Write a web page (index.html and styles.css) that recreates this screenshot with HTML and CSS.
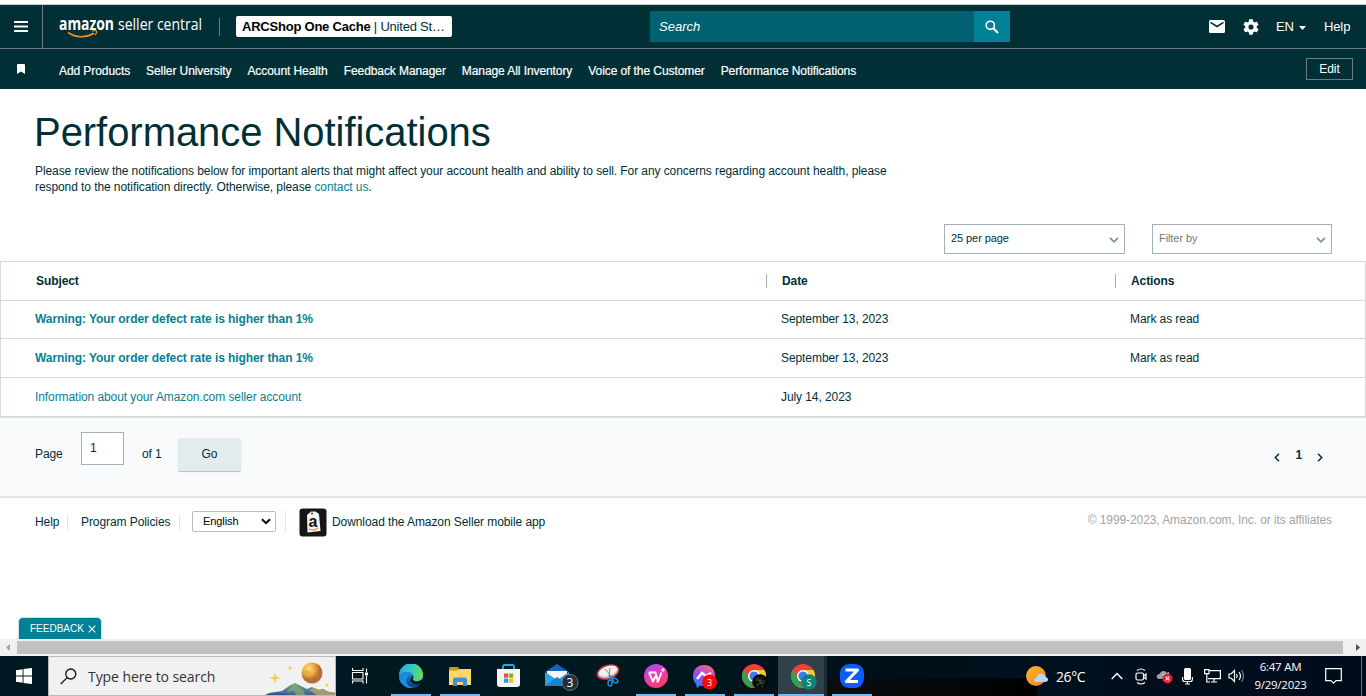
FILE: index.html
```html
<!DOCTYPE html>
<html lang="en">
<head>
    <meta charset="UTF-8">
    <meta name="viewport" content="width=device-width, initial-scale=1.0">
    <title>Performance Notifications</title>
    <link rel="stylesheet" href="styles.css">
</head>
<body>

    <header class="topbar">
        <div class="menu-button">
            <svg width="14" height="11" viewBox="0 0 14 11"><path d="M0 1h14M0 5.5h14M0 10h14" stroke="#fff" stroke-width="1.8"/></svg>
        </div>
        <svg class="logo" width="146" height="34" viewBox="0 -4 146 34">
            <text transform="translate(0 15) scale(.818 1)" class="logo-bold">amazon</text>
            <text transform="translate(59 15) scale(.825 1)" class="logo-light">seller central</text>
            <path d="M9 17.5c8 5.500 18 5.500 26 .8" fill="none" stroke="#f0932b" stroke-width="1.7"/>
            <path d="M33 16.300c2-.8 4-.9 4.500-.3s-.2 2.500-1.500 4" fill="none" stroke="#f0932b" stroke-width="1.200"/>
        </svg>
        <div class="logo-divider"></div>
        <div class="account"><b>ARCShop One Cache</b> <span>|</span> United St…</div>
        <div class="search">
            <div class="search-input">Search</div>
            <div class="search-button">
                <svg width="16" height="16" viewBox="0 0 16 16" fill="none" stroke="#fff"><circle cx="6.300" cy="6.300" r="4.100" stroke-width="1.600"/><path d="M9.300 9.300l4.700 4.700" stroke-width="2"/></svg>
            </div>
        </div>
        <div class="top-links">
            <svg width="16" height="13" viewBox="0 0 16 13"><rect width="16" height="13" rx="1.500" fill="#fff"/><path d="M1.500 2.300L8 6.500l6.500-4.200" fill="none" stroke="#002f36" stroke-width="1.500"/></svg>
            <svg class="gear" width="16" height="16" viewBox="2 2 20 20"><path fill="#fff" d="M19.140 12.940c.04-.3.060-.61.060-.94 0-.32-.02-.64-.07-.94l2.030-1.580c.18-.14.230-.41.120-.61l-1.920-3.320c-.12-.22-.37-.29-.59-.22l-2.390.96c-.5-.38-1.030-.7-1.620-.94l-.36-2.540c-.04-.24-.24-.41-.48-.41h-3.840c-.24 0-.43.170-.47.410l-.36 2.540c-.59.240-1.130.57-1.620.94l-2.390-.96c-.22-.08-.47 0-.59.220L2.740 8.870c-.12.210-.08.470.12.610l2.030 1.580c-.05.300-.09.630-.09.940s.02.640.070.940l-2.030 1.580c-.18.140-.23.410-.12.610l1.920 3.320c.12.220.370.290.590.220l2.390-.96c.5.380 1.030.700 1.620.940l.360 2.540c.05.240.240.410.480.410h3.840c.24 0 .440-.17.470-.41l.360-2.540c.59-.24 1.130-.56 1.620-.94l2.390.960c.22.080.470 0 .590-.22l1.920-3.320c.12-.22.070-.47-.12-.61l-2.010-1.580zM12 15.200A3.200 3.200 0 1 1 12 8.800a3.200 3.200 0 0 1 0 6.400z"/></svg>
            <span class="lang">EN</span>
            <svg class="caret" width="7" height="4" viewBox="0 0 7 4"><path d="M0 0h7L3.500 4z" fill="#fff"/></svg>
            <span class="help">Help</span>
        </div>
    </header>

    <nav class="favorites">
        <svg class="bookmark" width="8" height="10" viewBox="0 0 8 10"><path d="M0 1q0-1 1-1h6q1 0 1 1v9L4 7.500 0 10z" fill="#fff"/></svg>
        <a>Add Products</a>
        <a>Seller University</a>
        <a>Account Health</a>
        <a>Feedback Manager</a>
        <a>Manage All Inventory</a>
        <a>Voice of the Customer</a>
        <a>Performance Notifications</a>
        <div class="edit">Edit</div>
    </nav>

    <main>
        <h1>Performance Notifications</h1>
        <p class="intro">Please review the notifications below for important alerts that might affect your account health and ability to sell. For any concerns regarding account health, please<br>respond to the notification directly. Otherwise, please <a>contact us</a>.</p>

        <div class="filters">
            <div class="dropdown">25 per page
                <svg width="10" height="6" viewBox="0 0 10 6"><path d="M1 .8l4 4 4-4" fill="none" stroke="#7f9296" stroke-width="1.700"/></svg>
            </div>
            <div class="dropdown placeholder">Filter by
                <svg width="10" height="6" viewBox="0 0 10 6"><path d="M1 .8l4 4 4-4" fill="none" stroke="#7f9296" stroke-width="1.700"/></svg>
            </div>
        </div>

        <table>
            <tr class="head">
                <th class="subject">Subject</th>
                <th class="date"><span>Date</span></th>
                <th><span>Actions</span></th>
            </tr>
            <tr class="unread">
                <td><a>Warning: Your order defect rate is higher than 1%</a></td>
                <td>September 13, 2023</td>
                <td>Mark as read</td>
            </tr>
            <tr class="unread tall">
                <td><a>Warning: Your order defect rate is higher than 1%</a></td>
                <td>September 13, 2023</td>
                <td>Mark as read</td>
            </tr>
            <tr class="tall">
                <td><a>Information about your Amazon.com seller account</a></td>
                <td>July 14, 2023</td>
                <td></td>
            </tr>
        </table>

        <div class="pager">
            <span class="page-label">Page</span>
            <div class="page-input">1</div>
            <span class="page-total">of 1</span>
            <div class="go">Go</div>
            <div class="page-links">
                <svg width="6" height="9" viewBox="0 0 6 9"><path d="M5 .8L1.300 4.500 5 8.200" fill="none" stroke="#002f36" stroke-width="1.500"/></svg>
                <b>1</b>
                <svg width="6" height="9" viewBox="0 0 6 9"><path d="M1 .8l3.700 3.700L1 8.200" fill="none" stroke="#002f36" stroke-width="1.500"/></svg>
            </div>
        </div>
    </main>

    <footer>
        <span class="foot-help">Help</span>
        <span class="foot-policies">Program Policies</span>
        <span class="foot-lang">
            <span class="language">English
                <svg width="10" height="7" viewBox="0 0 10 7"><path d="M1 1.200l4 4 4-4" fill="none" stroke="#000" stroke-width="2"/></svg>
            </span>
        </span>
        <svg class="app-icon" width="28" height="29" viewBox="0 0 28 29">
            <rect x=".5" y=".5" width="27" height="28" rx="3" fill="#161616"/>
            <path d="M8 7l4-3.500h4.500L20 6l1.500 17-13 1.500z" fill="#f4f4f2"/>
            <circle cx="13" cy="5.500" r="1" fill="#333"/>
            <text x="9.500" y="18.500" class="app-a">a</text>
            <path d="M10 20.800q5 2.500 9-.8" fill="none" stroke="#f39a1f" stroke-width="1.300"/>
        </svg>
        <span class="download">Download the Amazon Seller mobile app</span>
        <span class="copyright">© 1999-2023, Amazon.com, Inc. or its affiliates</span>
    </footer>

    <div class="feedback">FEEDBACK
        <svg width="8" height="8" viewBox="0 0 8 8"><path d="M.7.7l6.600 6.600M7.300.7L.7 7.300" stroke="#fff" stroke-width="1.100"/></svg>
    </div>

    <div class="scrollbar">
        <svg width="17" height="17" viewBox="0 0 17 17"><path d="M10 5v7L6 8.500z" fill="#a3a3a3"/></svg>
        <div class="thumb"></div>
        <svg class="arrow-right" width="17" height="17" viewBox="0 0 17 17"><path d="M7 5v7l4-3.500z" fill="#505050"/></svg>
    </div>

    <div class="taskbar">
        <div class="start">
            <svg width="16" height="16" viewBox="0 0 16 16" fill="#fff"><path d="M0 2.200L6.600 1.300v6.200H0zM7.500 1.100L16 0v7.500H7.500zM0 8.400h6.600v6.300L0 13.800zM7.500 8.400H16V16l-8.500-1.100z"/></svg>
        </div>
        <div class="win-search">
            <svg class="glass" width="17" height="17" viewBox="0 0 17 17" fill="none" stroke="#111" stroke-width="1.300"><circle cx="10.800" cy="6" r="5"/><path d="M7.200 9.600L.7 16"/></svg>
            <span>Type here to search</span>
            <svg class="scene" width="76" height="38" viewBox="-1 -2 76 38">
                <defs>
                    <linearGradient id="hill" x1="0" y1="0" x2="0" y2="1"><stop offset="0" stop-color="#76a56c"/><stop offset=".5" stop-color="#527c9b"/><stop offset="1" stop-color="#2e56a0"/></linearGradient>
                    <radialGradient id="moon" cx=".35" cy=".3"><stop offset="0" stop-color="#ffdc75"/><stop offset=".65" stop-color="#eaa744"/><stop offset="1" stop-color="#b66e35"/></radialGradient>
                </defs>
                <path d="M1 38l8-4 6-1 7-1 7-5 6-3 6 3 6 3 5-2 6 3 5-1 6 3 7 1v4z" fill="url(#hill)"/>
                <path d="M49 31l5-2 6 2 5 0 5 2 6 2v3H60z" fill="#a69a6a"/>
                <path d="M35 24l3 4 5 3 3 7h-9l-3-6-7 1z" fill="#8aaa72" opacity=".7"/>
                <path d="M0 38q12-5 24-3 8 2 15 3z" fill="#284c9a"/>
                <circle cx="52" cy="14" r="10.500" fill="url(#moon)"/>
                <g fill="#cf8e3c" opacity=".4"><circle cx="47" cy="13" r="2"/><circle cx="55" cy="8" r="1.600"/><circle cx="57" cy="16" r="2.200"/><circle cx="50" cy="20" r="1.500"/></g>
                <path d="M15 13l1.200 4.800L21 19l-4.800 1.200L15 25l-1.200-4.800L9 19l4.800-1.200zM30 6l.7 2.300L33 9l-2.300.7L30 12l-.7-2.300L27 9l2.300-.7z" fill="#f7ca52"/>
                <circle cx="67" cy="26" r="1.500" fill="#f7ca52"/>
            </svg>
        </div>
        <div class="app task-view">
            <svg width="18" height="18" viewBox="0 0 18 18" fill="none" stroke="#fff" stroke-width="1.100"><path d="M1.500 1v2.500H12V1M1.500 16.500V14H12v2.500M1.500 5.500h10.500v6.500H1.500zM15.500 1.500V5M15.500 9v7.500"/><path d="M14 5.500h3v3h-3z" fill="#fff" stroke="none"/></svg>
        </div>
        <div class="app open">
            <svg width="24" height="24" viewBox="0 0 24 24">
                <defs>
                    <linearGradient id="edge-top" x1="0" y1=".3" x2="1" y2=".5"><stop offset="0" stop-color="#26a6e4"/><stop offset=".5" stop-color="#35c7c7"/><stop offset="1" stop-color="#65dc54"/></linearGradient>
                </defs>
                <circle cx="12" cy="12" r="12" fill="#1767b7"/>
                <path d="M0 11.500A12 12 0 0 1 24 11c0 4-3 6-6 6-3.500 0-5-1-4-2.500C15.500 12 13 8.500 9 8c-4-.5-8 1-9 3.500z" fill="url(#edge-top)"/>
                <path d="M0 12c1-3 5-4.500 8.500-4 3.500.4 5.500 2.500 5.500 4-3-2-6 0-6 4 0 3.500 2.500 6 5.500 7.900A12 12 0 0 1 0 12z" fill="#1b8cd9"/>
                <path d="M9 13c-1.500 6 5 9.500 12.500 6l-1 2c-4.500 4-12 2.500-13-3.500z" fill="#12458c"/>
                <path d="M14 12c1.200 2-1 3 .2 4.200 1.800 2 6 1.500 8.300-.5l1.500 1.300-2.500 2.500c-4 2-10 .5-10.500-3.500z" fill="#021821"/>
            </svg>
        </div>
        <div class="app open">
            <svg width="22" height="19" viewBox="0 0 22 19"><path d="M0 1.500Q0 0 1.500 0H9l1.500 2H22v16H0z" fill="#d9970d"/><path d="M0 3.500h8.500l2-1.500H22v16H0z" fill="#ffd765"/><path d="M4 19v-6.500q0-2 2-2h10q2 0 2 2V19h-4v-4H8v4z" fill="#3c91db"/></svg>
        </div>
        <div class="app">
            <svg width="23" height="24" viewBox="0 0 23 24"><path d="M6 6V2.500Q6 1 7.500 1h8Q17 1 17 2.500V6" fill="none" stroke="#26a9ec" stroke-width="1.800"/><path d="M0 5h23v15q0 3-3 3H3q-3 0-3-3z" fill="#f5f5f5"/><path d="M7 9.500h4.200v4.200H7z" fill="#ef5223"/><path d="M12 9.500h4.200v4.200H12z" fill="#7cba14"/><path d="M7 14.500h4.200v4.200H7z" fill="#1ba2e8"/><path d="M12 14.500h4.200v4.200H12z" fill="#fcb813"/></svg>
        </div>
        <div class="app">
            <svg class="mail" width="34" height="28" viewBox="0 0 34 28"><path d="M0 9L12 1l12 8z" fill="#1267b7"/><path d="M2 8h20v9H2z" fill="#f3f6f8"/><path d="M0 9l12 8 12-8v14H0z" fill="#2da0e8"/><path d="M0 23l12-9 12 9z" fill="#1685d4"/><circle cx="25" cy="19.500" r="8" fill="#252e34" stroke="#69747a"/><text x="25" y="24" class="badge-text">3</text></svg>
        </div>
        <div class="app">
            <svg width="24" height="24" viewBox="0 0 24 24"><ellipse cx="13" cy="8" rx="11" ry="6.500" transform="rotate(-18 13 8)" fill="#b9bec2" stroke="#d32f35" stroke-width="1.500"/><ellipse cx="13" cy="7" rx="9.500" ry="4.800" transform="rotate(-18 13 7)" fill="#eef0f0"/><path d="M10 5l7 8M15 4l-1 9" stroke="#858d93" stroke-width="1"/><path d="M14 12l5 5M15 11l-.5 6" stroke="#2389cb" stroke-width="1.300"/><ellipse cx="15" cy="19" rx="2" ry="3" fill="none" stroke="#2389cb" stroke-width="1.500"/><ellipse cx="20" cy="16.500" rx="3" ry="2" transform="rotate(35 20 16.500)" fill="none" stroke="#2389cb" stroke-width="1.500"/></svg>
        </div>
        <div class="app open">
            <svg width="24" height="24" viewBox="0 0 24 24"><defs><linearGradient id="wps" x1=".2" y1="0" x2=".7" y2="1"><stop offset="0" stop-color="#a64af5"/><stop offset=".5" stop-color="#ef3bb2"/><stop offset="1" stop-color="#fa3d5d"/></linearGradient></defs><circle cx="12" cy="12" r="12" fill="url(#wps)"/><path d="M4.800 8.500h6.700L14 17.500l3.500-9M5 8.500l4 9 3-6M12.500 17.500H14M9 17.500H8" fill="none" stroke="#fff" stroke-width="1.900" stroke-linejoin="round"/><path d="M19 4v4M17 6h4" stroke="#fff" stroke-width="1.200"/></svg>
        </div>
        <div class="app open">
            <svg class="messenger" width="24" height="26" viewBox="0 0 24 26"><defs><linearGradient id="chat" x1=".7" y1="0" x2=".2" y2="1"><stop offset="0" stop-color="#fb6477"/><stop offset=".5" stop-color="#a047f5"/><stop offset="1" stop-color="#168bff"/></linearGradient></defs><path d="M11 1c7 0 11 4.500 11 10.500S18 22 11 22c-1.500 0-3-.3-4-.6L4 24l-1-4C1 18 0 15 0 11.500 0 5.500 4.500 1 11 1z" fill="url(#chat)"/><path d="M4 15l5-6 4 3 5-3" fill="none" stroke="#fff" stroke-width="2.500"/><circle cx="16.500" cy="18" r="7.500" fill="#f50a0a"/><text x="16.500" y="21.500" class="badge-small">3</text></svg>
        </div>
        <div class="app open">
            <svg class="chrome" width="26" height="26" viewBox="0 0 26 26"><circle cx="12" cy="12" r="12" fill="#ef4135"/><path d="M1.600 6L7 15l5 9A12 12 0 0 1 1.600 6z" fill="#2fa34f"/><path d="M12 6h10.400A12 12 0 0 1 12 24l5-9z" fill="#fcc629"/><circle cx="12" cy="12" r="6" fill="#fff"/><circle cx="12" cy="12" r="4.600" fill="#3b7ded"/><circle cx="18" cy="18" r="7.800" fill="#09090b"/><path d="M13 16l10 1M14 21l9-3M16 13l5 11" stroke="#2f5a3a" stroke-width=".8"/><path d="M14 14l9 7M20 13l-5 10" stroke="#455" stroke-width=".6"/></svg>
        </div>
        <div class="app open active">
            <svg class="chrome" width="26" height="26" viewBox="0 0 26 26"><circle cx="12" cy="12" r="12" fill="#ef4135"/><path d="M1.600 6L7 15l5 9A12 12 0 0 1 1.600 6z" fill="#2fa34f"/><path d="M12 6h10.400A12 12 0 0 1 12 24l5-9z" fill="#fcc629"/><circle cx="12" cy="12" r="6" fill="#fff"/><circle cx="12" cy="12" r="4.600" fill="#3b7ded"/><circle cx="18" cy="18" r="7.800" fill="#078477"/><text x="18" y="21.500" class="badge-small">S</text></svg>
        </div>
        <div class="app open">
            <svg width="24" height="24" viewBox="0 0 24 24"><rect width="24" height="24" rx="9" fill="#0b5cff"/><path d="M5.500 6h12L6.500 17.500H18" fill="none" stroke="#fff" stroke-width="3.200" stroke-linejoin="round"/></svg>
        </div>
        <div class="tray">
            <svg class="weather" width="23" height="21" viewBox="0 0 23 21"><defs><linearGradient id="sun" x1="0" y1="0" x2="1" y2="1"><stop offset="0" stop-color="#f9bd29"/><stop offset="1" stop-color="#f47722"/></linearGradient></defs><circle cx="10" cy="10" r="10" fill="url(#sun)"/><path d="M10 16c-3-.5-2.500-4 .5-4 .5-3 2-4.500 4.500-4.500S19 9 19 11c4 0 4 5 0 5z" fill="#bcd5fa"/></svg>
            <span class="temp">26°C</span>
            <svg class="chevron" width="12" height="8" viewBox="0 0 12 8"><path d="M.7 7L6 1.500 11.300 7" fill="none" stroke="#fff" stroke-width="1.400"/></svg>
            <svg class="meet" width="12" height="17" viewBox="0 0 12 17" fill="none" stroke="#fff" stroke-width="1.200"><path d="M2 2.500q4-3 8 0M2 14.500q4 3 8 0"/><rect x="1" y="5" width="7.500" height="7" rx="1.500"/><path d="M8.500 8l2.500-2v5L8.500 9"/></svg>
            <svg class="cloud" width="17" height="15" viewBox="0 0 17 15"><path d="M3.500 10C-.5 10 0 5 3.500 5 5 1 10.500 1 11 5l2 1v4z" fill="#9da1a7"/><path d="M5 6l8-3v6z" fill="#c4c6c8"/><circle cx="11.500" cy="9.500" r="5" fill="#e31f31"/><path d="M9.700 7.700l3.600 3.600M13.300 7.700l-3.600 3.600" stroke="#fff" stroke-width="1.200"/></svg>
            <svg class="mic" width="11" height="17" viewBox="0 0 11 17"><rect x="2" y="0" width="7" height="12" rx="1.500" fill="#fff"/><path d="M.6 9v2.500q0 2 2 2h5.800q2 0 2-2V9M5.500 13.500V16M3 16h5" fill="none" stroke="#fff" stroke-width="1.100"/></svg>
            <svg class="network" width="17" height="14" viewBox="0 0 17 14" fill="none" stroke="#fff" stroke-width="1.200"><path d="M5.500 1.600h10.900v8H4M7 13h6M10 10v3M.6.600h4.400v4H.6zM2.800 5v8H6"/></svg>
            <svg class="volume" width="17" height="14" viewBox="0 0 17 14" fill="none" stroke="#fff" stroke-width="1.200"><path d="M1 5h2l3.500-3.500v11L3 9H1zM8.500 5q1.500 2 0 4M11 3q3 4 0 8"/><path d="M13.500 1q4 6 0 12" stroke="#777c86"/></svg>
            <div class="clock"><span>6:47 AM</span><span>9/29/2023</span></div>
            <svg class="notice" width="17" height="17" viewBox="0 0 17 17"><path d="M.7.700h15.600v12H11L8.500 15.200 6 12.700H.7z" fill="none" stroke="#fff" stroke-width="1.200"/></svg>
            <div class="show-desktop"></div>
        </div>
    </div>

</body>
</html>
```

FILE: styles.css
```css
* {
    box-sizing: border-box;
}
body {
    margin: 0;
    width: 1366px;
    height: 696px;
    overflow: hidden;
    display: flex;
    flex-direction: column;
    font-family: "Liberation Sans", Arial, sans-serif;
    font-size: 12px;
    letter-spacing: -0.08px;
    color: #002f36;
    background: #fff;
}
svg {
    display: block;
    flex: none;
}
.topbar {
    display: flex;
    align-items: center;
    height: 45px;
    margin-top: 4px;
    flex: none;
    background: #002f36;
    border-top: 1px solid #c8cccd;
    border-bottom: 1px solid #697c80;
    color: #fff;
}
.menu-button {
    display: flex;
    align-items: center;
    width: 43px;
    height: 43px;
    padding-left: 14px;
    border-right: 1px solid #697c80;
}
.logo {
    margin: 2px 0 0 16px;
}
.logo text {
    font-family: "Open Sans", sans-serif;
    font-size: 17px;
    letter-spacing: 0;
    fill: #fff;
}
.logo .logo-bold {
    font-weight: 700;
}
.logo .logo-light {
    font-weight: 400;
}
.logo-divider {
    width: 1px;
    height: 18px;
    margin-left: 14px;
    background: #697c80;
}
.account {
    width: 216px;
    height: 21px;
    margin-left: 16px;
    padding-left: 6px;
    border-radius: 2px;
    background: #fff;
    color: #002f36;
    font-size: 13px;
    letter-spacing: -0.22px;
    line-height: 21px;
    white-space: nowrap;
}
.account b {
    color: #000;
}
.search {
    display: flex;
    width: 360px;
    height: 31px;
    margin-left: 198px;
}
.search-input {
    flex: 1;
    padding-left: 9px;
    background: #006170;
    font-size: 13px;
    font-style: italic;
    letter-spacing: 0;
    line-height: 31px;
}
.search-button {
    display: flex;
    align-items: center;
    justify-content: center;
    width: 36px;
    background: #008296;
}
.top-links {
    display: flex;
    align-items: center;
    margin-left: 199px;
    font-size: 13px;
}
.gear {
    margin-left: 18px;
}
.lang {
    margin-left: 17px;
}
.caret {
    margin: 2px 0 0 5px;
}
.help {
    margin-left: 18px;
}
.favorites {
    display: flex;
    align-items: center;
    gap: 16px;
    height: 40px;
    flex: none;
    padding: 3px 13px 0 17px;
    background: #002f36;
    color: #fff;
}
.bookmark {
    margin: -4px 18px 0 0;
}
.edit {
    width: 47px;
    height: 22px;
    margin: -3px 0 0 auto;
    border: 1px solid #697c80;
    line-height: 20px;
    text-align: center;
}
main {
    flex: none;
}
h1 {
    margin: 20px 0 0 34px;
    font-size: 40px;
    font-weight: 400;
    line-height: 46px;
    letter-spacing: -0.05px;
}
.intro {
    margin: 8px 0 0 35px;
    line-height: 16px;
}
a {
    color: #077f93;
}
.favorites a {
    color: #fff;
    -webkit-text-stroke: 0.2px #fff;
    white-space: nowrap;
}
.filters {
    display: flex;
    justify-content: flex-end;
    gap: 27px;
    margin: 29px 34px 7px 0;
}
.dropdown {
    display: flex;
    align-items: center;
    justify-content: space-between;
    width: 181px;
    height: 30px;
    padding: 0 5px 2px 6px;
    border: 1px solid #a2b1b3;
    font-size: 11px;
}
.dropdown svg {
    margin-top: 4px;
}
.placeholder {
    width: 180px;
    color: #697c80;
}
table {
    width: 1366px;
    table-layout: fixed;
    border-collapse: separate;
    border-spacing: 0;
    border: 1px solid #d5dbdb;
    border-bottom-color: #d9dfe2;
}
th, td {
    height: 38px;
    padding: 0 0 2px;
    border-bottom: 1px solid #d5dbdb;
    text-align: left;
}
.head th {
    height: 39px;
    padding-bottom: 1px;
}
th.subject {
    width: 765px;
    padding-left: 35px;
}
th.date {
    width: 349px;
}
th span {
    display: block;
    padding-left: 15px;
    border-left: 1px solid #a2b1b3;
    line-height: 14px;
}
td {
    padding-left: 15px;
}
td:first-child {
    padding-left: 34px;
}
.tall td {
    height: 39px;
    padding-bottom: 1px;
}
.unread a {
    font-weight: 700;
}
.pager {
    display: flex;
    align-items: flex-start;
    height: 80px;
    padding: 14px 43px 0 35px;
    background: #f9fafc;
    border-bottom: 2px solid #e1e4e8;
}
.page-label {
    width: 46px;
    margin-top: 15px;
}
.page-input {
    width: 43px;
    height: 33px;
    padding: 8px 0 0 8px;
    border: 1px solid #a2b1b3;
    background: #fff;
}
.page-total {
    width: 36px;
    margin: 15px 0 0 18px;
}
.go {
    width: 63px;
    height: 33px;
    margin-top: 6px;
    border-radius: 2px;
    background: #e3eced;
    box-shadow: 0 1px 1px #b4bcbd;
    line-height: 32px;
    text-align: center;
}
.page-links {
    display: flex;
    align-items: center;
    gap: 15px;
    margin: 18px 0 0 auto;
}
.page-links b {
    margin-top: -4px;
    line-height: 18px;
}
footer {
    display: flex;
    align-items: center;
    height: 49px;
    flex: none;
    padding: 0 34px 2px 0;
    line-height: 17px;
}
.foot-help {
    width: 33px;
    margin: 2px 0 0 35px;
    border-right: 1px solid #e1e4e8;
}
.foot-policies {
    width: 112px;
    margin-top: 2px;
    padding-left: 13px;
    border-right: 1px solid #e1e4e8;
}
.foot-lang {
    width: 106px;
    padding-left: 12px;
    border-right: 1px solid #e1e4e8;
}
.language {
    display: flex;
    align-items: center;
    justify-content: space-between;
    width: 84px;
    height: 21px;
    padding: 0 4px 0 10px;
    border: 1px solid #bcbcbc;
    border-radius: 2px;
    color: #000;
    font-size: 11px;
}
.app-icon {
    margin: 2px 5px 0 13px;
}
.app-a {
    font-size: 16px;
    font-weight: 700;
    fill: #111;
}
.download {
    margin-top: 2px;
}
.copyright {
    margin: -2px 0 0 auto;
    color: #a3a3a3;
}
.feedback {
    display: flex;
    align-items: center;
    gap: 4px;
    width: 84px;
    height: 22px;
    flex: none;
    margin: auto 0 0 18px;
    padding-left: 11px;
    border: 1px solid #d0dfe1;
    border-bottom: 0;
    border-radius: 5px 5px 0 0;
    background: #008296;
    color: #fff;
    font-size: 10px;
    letter-spacing: 0;
}
.scrollbar {
    display: flex;
    height: 17px;
    flex: none;
    background: #f1f1f1;
}
.thumb {
    width: 1326px;
    height: 13px;
    margin-top: 2px;
    background: #c1c1c1;
}
.arrow-right {
    margin-left: 6px;
}
.taskbar {
    display: flex;
    height: 40px;
    flex: none;
    background:
        linear-gradient(90deg, #0b0f12, #000) 815px 22px / 222px 18px no-repeat,
        linear-gradient(90deg, #001922 0%, #001820 45%, #001019 65%, #00101d 76%, #010c1b 100%);
    color: #fff;
    font-family: "Open Sans", "Noto Sans", sans-serif;
}
.start {
    display: flex;
    align-items: center;
    width: 48px;
    padding-left: 16px;
}
.win-search {
    display: flex;
    align-items: center;
    width: 288px;
    height: 40px;
    border: 1px solid #b9b9b9;
    background: #f1f1f1;
    color: #333;
    font-size: 14px;
    white-space: nowrap;
}
.glass {
    margin: 0 11px 0 11px;
}
.scene {
    margin-left: auto;
}
.app {
    display: flex;
    align-items: center;
    justify-content: center;
    width: 49px;
    height: 40px;
    flex: none;
    background: linear-gradient(transparent, transparent) center bottom / 40px 2px no-repeat;
}
.task-view {
    width: 50px;
    padding-right: 2px;
}
.open {
    background-image: linear-gradient(#76b9ed, #76b9ed);
}
.active {
    background-color: #30414a;
    background-size: 49px 2px;
    box-shadow: inset -3px 0 #1d2c33;
}
.mail {
    margin: 2px 0 0 8px;
}
.messenger {
    margin-top: 1px;
}
.chrome {
    margin: 2px 0 0 2px;
}
.active .chrome {
    margin-left: 3px;
}
.badge-text, .badge-small {
    fill: #fff;
    font-size: 12px;
    text-anchor: middle;
}
.badge-small {
    font-size: 9px;
}
.tray {
    display: flex;
    align-items: center;
    flex: 1;
    padding-left: 150px;
}
.temp {
    width: 47px;
    margin-left: 7px;
    font-size: 14px;
    letter-spacing: -0.4px;
}
.chevron {
    margin-left: 8px;
}
.meet {
    margin-left: 12px;
}
.cloud {
    margin-left: 9px;
}
.mic {
    margin-left: 9px;
}
.network {
    margin-left: 11px;
}
.volume {
    margin-left: 7px;
}
.clock {
    display: flex;
    flex-direction: column;
    align-items: center;
    width: 71px;
    font-size: 11.5px;
    letter-spacing: -0.25px;
    line-height: 18px;
}
.notice {
    margin-left: 9px;
}
.show-desktop {
    width: 5px;
    height: 40px;
    margin-left: auto;
    border-left: 1px solid #6b7078;
}
```
